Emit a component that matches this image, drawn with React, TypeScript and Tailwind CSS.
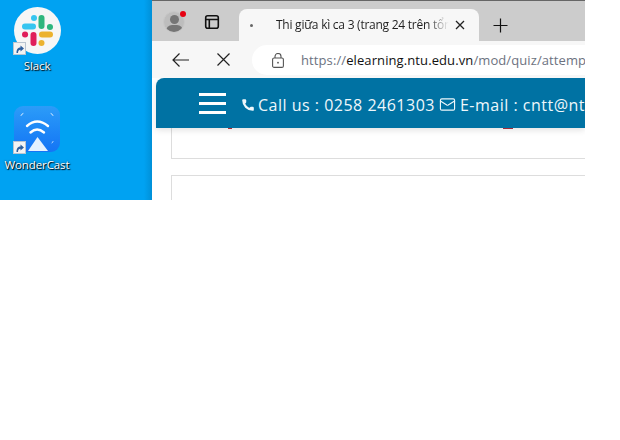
import { Phone, Mail } from 'lucide-react';

function ShortcutBadge() {
  return (
    <div className="absolute left-[13px] bottom-[-1px] w-[13px] h-[13px] bg-[#f3f3f3] border border-[#b9c4d0] flex items-center justify-center">
      <svg width="11" height="11" viewBox="0 0 11 11">
        <path d="M2.5 10 C2.5 6 4 4.5 6.5 4.5 V2.5 L10 5.5 L6.5 8.5 V6.8 C5 6.8 4 8 4 10 Z" fill="#2f5f9e" />
      </svg>
    </div>
  );
}

function DesktopIcon({ label, top, left, children }: { label: string; top: number; left: number; children: React.ReactNode }) {
  return (
    <div className="absolute w-[74px] flex flex-col items-center" style={{ top, left }}>
      <div className="relative w-[74px] h-[47px] flex justify-center">
        {children}
        <ShortcutBadge />
      </div>
      <span className="mt-[4px] text-[11.5px] leading-[16px] tracking-[-0.1px] text-white [font-family:'Open_Sans',sans-serif] [text-shadow:1px_1px_1px_#000,0_0_2px_#003a60]">{label}</span>
    </div>
  );
}

function SlackLogo() {
  return (
    <div className="w-[47px] h-[47px] rounded-full bg-[#f6f6f6] flex items-center justify-center">
      <svg width="33" height="33" viewBox="0 0 33 33" fill="none" strokeWidth="6" strokeLinecap="round">
        <path d="M4 12.5H12" stroke="#36c5f0" />
        <path d="M13 4V4.1" stroke="#36c5f0" />
        <path d="M20.5 4V12" stroke="#2eb67d" />
        <path d="M29 13H28.9" stroke="#2eb67d" />
        <path d="M21 20.5H29" stroke="#ecb22e" />
        <path d="M20.5 29V28.9" stroke="#ecb22e" />
        <path d="M12.5 21V29" stroke="#e01e5a" />
        <path d="M4 20.5H4.1" stroke="#e01e5a" />
      </svg>
    </div>
  );
}

function WonderCastLogo() {
  return (
    <div className="w-[46px] h-[46px] rounded-[9px] bg-gradient-to-b from-[#2c9cf8] to-[#1574f5] flex items-center justify-center">
      <svg width="46" height="46" viewBox="0 0 46 46" fill="none" stroke="#fff" strokeLinecap="round">
        <path d="M7 9.5Q7.5 8 9 7.5" strokeWidth="1" opacity="0.8" />
        <path d="M37 7.5Q38.5 8 39 9.5" strokeWidth="1" opacity="0.8" />
        <path d="M38 37Q38.5 36.5 39 35.5" strokeWidth="1" opacity="0.7" />
        <path d="M13 20Q23 11 34 20" strokeWidth="2.4" />
        <path d="M16.5 26.5Q23 20.5 30 26.5" strokeWidth="2.4" />
        <path d="M14 45L23.5 31L34 45Z" fill="#e4f2ff" stroke="none" />
      </svg>
    </div>
  );
}

export default function App() {
  return (
    <div className="relative w-[620px] h-[440px] bg-white overflow-hidden">
      <div className="w-[585px] h-[200px] flex">
        {/* desktop */}
        <div className="relative w-[152px] shrink-0 bg-[#00a2f2]">
          <DesktopIcon label="Slack" top={7} left={0}>
            <SlackLogo />
          </DesktopIcon>
          <DesktopIcon label="WonderCast" top={106} left={0}>
            <WonderCastLogo />
          </DesktopIcon>
          <div className="absolute right-0 top-0 bottom-0 w-[8px] bg-gradient-to-r from-transparent to-[#0090d8]" />
        </div>

        {/* browser window */}
        <div className="flex-1 min-w-0 flex flex-col border-t border-[#666] bg-white overflow-hidden [font-family:'Open_Sans',sans-serif]">
          {/* tab strip */}
          <div className="h-[40px] shrink-0 bg-[#cccccc] flex items-end pl-[11px]">
            <div className="self-center flex items-center mb-[-1px] shrink-0">
              <div className="relative w-[22px] h-[22px]">
                <div className="relative w-[22px] h-[22px] rounded-full bg-[#bdbdbd] overflow-hidden border border-[#c8c8c8]">
                  <div className="absolute left-[6px] top-[3px] w-[9px] h-[9px] rounded-full bg-[#757575]" />
                  <div className="absolute left-[2px] top-[13px] w-[17px] h-[12px] rounded-full bg-[#757575]" />
                </div>
                <div className="absolute left-[17px] top-[0px] w-[6px] h-[6px] rounded-full bg-[#e60012]" />
              </div>
              <svg className="ml-[19px]" width="16" height="16" viewBox="0 0 16 16" fill="none" stroke="#111" strokeWidth="1.6">
                <rect x="1.7" y="1.7" width="12.6" height="12.6" rx="2" />
                <path d="M1.7 5.5H14.3M5.3 5.5V14.3" />
              </svg>
            </div>
            <div className="ml-[19px] w-[240px] h-[32px] shrink-0 bg-[#f7f7f7] rounded-t-[8px] flex items-center">
              <div className="ml-[11px] w-[3px] h-[3px] rounded-full bg-[#666] shrink-0" />
              <span className="ml-[23px] w-[178px] shrink-0 whitespace-nowrap text-[12px] leading-[16px] tracking-[-0.25px] text-[#1f1f1f] [mask-image:linear-gradient(to_right,#000_85%,transparent_97%)]">Thi giữa kì ca 3 (trang 24 trên tổn</span>
              <svg className="ml-[1px] shrink-0" width="10" height="10" viewBox="0 0 10 10" stroke="#222" strokeWidth="1.3">
                <path d="M1 1L9 9M9 1L1 9" />
              </svg>
            </div>
            <svg className="self-center ml-[14px] mt-[8px] shrink-0" width="15" height="15" viewBox="0 0 15 15" stroke="#111" strokeWidth="1.2">
              <path d="M7.5 0.5V14.5M0.5 7.5H14.5" />
            </svg>
          </div>

          {/* toolbar */}
          <div className="h-[37px] shrink-0 bg-[#f7f7f7] flex items-center pl-[20px]">
            <svg className="shrink-0" width="17" height="14" viewBox="0 0 17 14" fill="none" stroke="#222" strokeWidth="1.2">
              <path d="M17 7H1M7.5 0.5L1 7L7.5 13.5" />
            </svg>
            <svg className="ml-[28px] shrink-0" width="13" height="13" viewBox="0 0 13 13" stroke="#222" strokeWidth="1.2">
              <path d="M0.5 0.5L12.5 12.5M12.5 0.5L0.5 12.5" />
            </svg>
            <div className="ml-[22px] flex-1 min-w-0 h-[30px] bg-white rounded-l-[15px] flex items-center pl-[20px] mb-[-1px] overflow-hidden">
              <svg className="shrink-0" width="12" height="15" viewBox="0 0 12 15" fill="none" stroke="#555" strokeWidth="1.1">
                <rect x="0.6" y="5" width="10.8" height="9.4" rx="1.5" />
                <path d="M3 5V3.5a3 3 0 0 1 6 0V5" />
                <circle cx="6" cy="9.7" r="0.9" fill="#555" stroke="none" />
              </svg>
              <span className="ml-[17px] whitespace-nowrap text-[13px] leading-[20px] tracking-[0.1px] text-[#6c7280]">
                https://<span className="text-[#111]">elearning.ntu.edu.vn</span>/mod/quiz/attemp
              </span>
            </div>
          </div>

          {/* page */}
          <div className="flex-1 min-h-0 flex flex-col pl-[4px] overflow-hidden">
            <div className="relative z-10 h-[50px] shrink-0 bg-[#0072a3] rounded-tl-[8px] flex items-center pl-[43px] text-[#eef7fb] shadow-[0_2px_6px_rgba(0,0,0,0.12)] whitespace-nowrap overflow-hidden">
              <div className="w-[27px] shrink-0 flex flex-col gap-[6px]">
                <div className="h-[3px] bg-white" />
                <div className="h-[3px] bg-white" />
                <div className="h-[3px] bg-white" />
              </div>
              <Phone size={14} fill="currentColor" strokeWidth={0} className="ml-[15px] mt-[3px] shrink-0" />
              <span className="ml-[3px] mt-[3px] shrink-0 text-[16px] leading-[22px] tracking-[0.5px]">Call us : 0258 2461303</span>
              <Mail size={17} strokeWidth={1.6} className="ml-[4px] mt-[3px] shrink-0" />
              <span className="ml-[4px] mt-[3px] shrink-0 text-[16px] leading-[22px] tracking-[0.5px]">E-mail : cntt@nt</span>
            </div>
            <div className="pl-[15px] flex flex-col">
              <div className="h-[31px] border-l border-b border-[#dddddd] relative">
                <div className="absolute left-[56px] top-0 w-[4px] h-[1px] bg-[#c0303a]" />
                <div className="absolute left-[331px] top-0 w-[10px] h-[1px] bg-[#b03040]" />
              </div>
              <div className="mt-[16px] h-[30px] border-l border-t border-[#dddddd]" />
            </div>
          </div>
        </div>
      </div>
    </div>
  );
}
